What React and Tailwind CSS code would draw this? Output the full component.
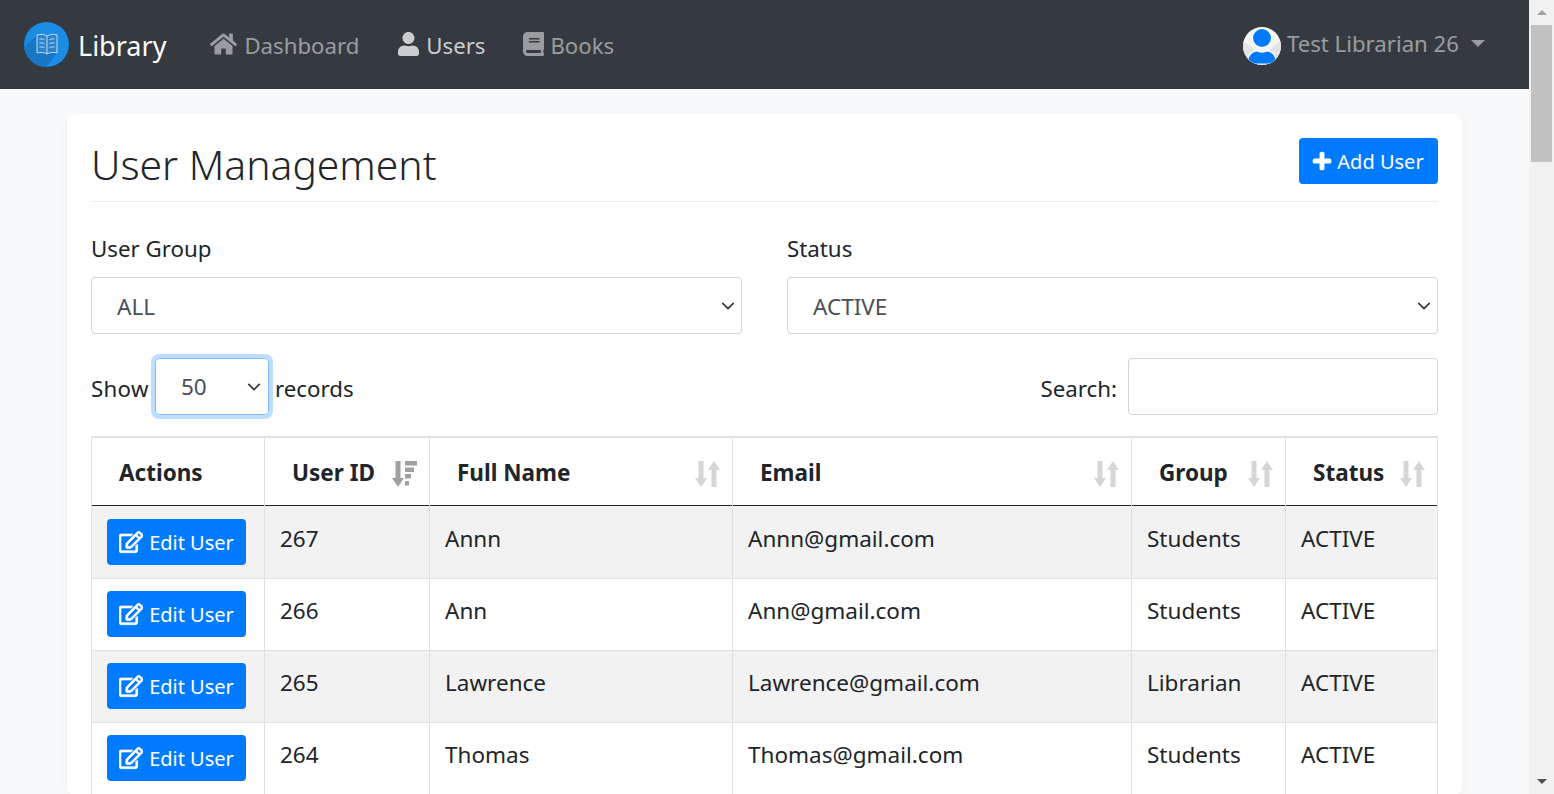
import React from 'react';
import { FaHome, FaUser, FaBook, FaPlus, FaRegEdit } from 'react-icons/fa';

const users = [
  { id: 267, name: 'Annn', email: 'Annn@gmail.com', group: 'Students' },
  { id: 266, name: 'Ann', email: 'Ann@gmail.com', group: 'Students' },
  { id: 265, name: 'Lawrence', email: 'Lawrence@gmail.com', group: 'Librarian' },
  { id: 264, name: 'Thomas', email: 'Thomas@gmail.com', group: 'Students' },
];

const SortIcon = () => (
  <svg viewBox="0 0 25 26" className="absolute right-[12px] top-[23px] h-[26px] w-[25px]" fill="#d6d6d6">
    <path d="M3.500 0h5v17H12L6 26 0 17h3.500z" />
    <path d="M16.500 26h5V9H25L19 0l-6 9h3.500z" />
  </svg>
);

const SortedIcon = () => (
  <svg viewBox="0 0 25 26" className="absolute right-[12px] top-[23px] h-[26px] w-[25px]" fill="#a0a0a0">
    <path d="M3.500 0h5v17H12L6 26 0 17h3.500z" />
    <path d="M13 0h12v4.500H13zM13 6.500h9V11h-9zM13 13h6v4.500h-6zM13 20h4v4.500h-4z" />
  </svg>
);

const Chevron = () => (
  <svg viewBox="0 0 16 16" className="h-[14px] w-[14px] text-[#343a40]" fill="none" stroke="currentColor" strokeWidth="2" strokeLinecap="round" strokeLinejoin="round">
    <path d="M2 5l6 6 6-6" />
  </svg>
);

const Logo = () => (
  <svg viewBox="0 0 45 45" className="h-[45px] w-[45px]">
    <defs>
      <clipPath id="logo-clip"><circle cx="22.5" cy="22.5" r="22.5" /></clipPath>
    </defs>
    <circle cx="22.5" cy="22.5" r="22.5" fill="#1b8ce3" />
    <g clipPath="url(#logo-clip)">
      <path d="M13 13L-3 29 18 50 33 31z" fill="#146fb8" opacity="0.7" />
    </g>
    <path d="M13 13c3.500-1 7-.8 10 1 3-1.800 6.500-2 10-1v18c-3.500-1-7-.8-10 1-3-1.800-6.500-2-10-1z" fill="#2b83cb" stroke="#cfe6f8" strokeWidth="0.9" />
    <path d="M23 14v18M15.500 17c1.800-.3 3.500 0 5 .7M15.500 21c1.800-.3 3.500 0 5 .7M15.500 25c1.800-.3 3.500 0 5 .7M30.500 17c-1.800-.3-3.500 0-5 .7M30.500 21c-1.800-.3-3.500 0-5 .7M30.500 25c-1.800-.3-3.500 0-5 .7" fill="none" stroke="#cfe6f8" strokeWidth="0.9" />
  </svg>
);

const Avatar = () => (
  <svg viewBox="0 0 38 38" className="mt-[2px] h-[38px] w-[38px]">
    <defs>
      <clipPath id="avatar-clip"><circle cx="19" cy="19" r="19" /></clipPath>
    </defs>
    <g clipPath="url(#avatar-clip)">
      <path d="M0 0h38v38H0z" fill="#f4f4f4" />
      <path d="M0 14l19 14 19-14v24H0z" fill="#e4e4e4" />
      <circle cx="19" cy="11" r="10.500" fill="#fff" />
      <circle cx="19" cy="11" r="9" fill="#007bff" />
      <path d="M4 38c0-9 3-14 9-15 4 1.500 8 1.500 12 0 6 1 9 6 9 15z" fill="#fff" />
      <path d="M5 36c0-6 3.500-11 8.500-11.500 3.500 1.500 7.500 1.500 11 0C29.500 25 33 30 33 36v2H5z" fill="#007bff" />
      <path d="M0 36.500h38V38H0z" fill="#fff" opacity="0.9" />
    </g>
  </svg>
);

const App = () => {
  return (
    <div className="flex h-[794px] w-[1554px] overflow-hidden bg-[#f8f9fa] text-[#212529] font-['Noto_Sans',sans-serif]">
      <div className="w-[1529px] shrink-0 overflow-hidden">
        <nav className="flex h-[89px] items-center bg-[#343a40] pl-[24px] pr-[44px]">
          <a className="flex items-center text-[27px] text-white">
            <Logo />
            <span className="ml-[9px] pt-[3px]">Library</span>
          </a>
          <div className="ml-[44px] flex items-center text-[22.2px] text-white/50">
            <a className="flex items-center">
              <FaHome className="h-[24px] w-[27px]" />
              <span className="ml-[7px] pt-[2px]">Dashboard</span>
            </a>
            <a className="ml-[39px] flex items-center text-white/75">
              <FaUser className="h-[24px] w-[21px]" />
              <span className="ml-[7px] pt-[2px]">Users</span>
            </a>
            <a className="ml-[38px] flex items-center">
              <FaBook className="h-[24px] w-[21px]" />
              <span className="ml-[6px] pt-[2px]">Books</span>
            </a>
          </div>
          <div className="ml-auto flex items-center text-[22.2px] text-white/50">
            <Avatar />
            <span className="ml-[6px] -mt-[2px]">Test Librarian 26</span>
            <span className="ml-[12px] -mt-[3px] h-0 w-0 border-x-[7px] border-t-[7px] border-x-transparent border-t-white/50" />
          </div>
        </nav>

        <main className="px-[67px] pt-[25px]">
          <div className="rounded-[8px] bg-white px-[24px] pt-[24px] shadow-[0_2px_8px_rgba(0,0,0,0.04)]">
            <div className="flex items-start justify-between border-b border-[#e9ecef] h-[64px]">
              <h1 className="text-[40.8px] font-light leading-[52px] text-[#212529]">User Management</h1>
              <button className="flex h-[46px] w-[139px] items-center justify-center rounded-[4px] bg-[#007bff] text-[20px] text-white">
                <FaPlus className="mr-[5px] -ml-[1px] h-[20px] w-[20px] stroke-[30px]" stroke="currentColor" />
                <span className="pt-[2px]">Add User</span>
              </button>
            </div>

            <div className="mt-[30px] grid grid-cols-2 gap-x-[45px]">
              <div>
                <label className="block text-[22.3px] leading-[34px]">User Group</label>
                <div className="mt-[11px] flex h-[57px] items-center justify-between rounded-[4px] border border-[#ced4da] pl-[25px] pr-[6px] text-[22.5px] text-[#495057]">
                  <span className="pt-[2px]">ALL</span>
                  <Chevron />
                </div>
              </div>
              <div>
                <label className="block text-[22.3px] leading-[34px]">Status</label>
                <div className="mt-[11px] flex h-[57px] items-center justify-between rounded-[4px] border border-[#ced4da] pl-[25px] pr-[6px] text-[22.5px] text-[#495057]">
                  <span className="pt-[2px]">ACTIVE</span>
                  <Chevron />
                </div>
              </div>
            </div>

            <div className="mt-[24px] flex h-[57px] items-center justify-between text-[22.3px]">
              <div className="flex items-center">
                <span className="w-[58px] pt-[4px] tracking-[0.3px]">Show</span>
                <div className="mx-[6px] flex h-[57px] w-[114px] items-center justify-between rounded-[4px] border border-[#80bdff] pl-[25px] pr-[7px] text-[22.5px] text-[#495057] shadow-[0_0_0_4px_rgba(0,123,255,0.25)]">
                  50
                  <Chevron />
                </div>
                <span className="pt-[4px]">records</span>
              </div>
              <div className="flex items-center">
                <span className="pt-[4px]">Search:</span>
                <div className="ml-[11px] h-[57px] w-[310px] rounded-[4px] border border-[#ced4da]" />
              </div>
            </div>

            <table className="mt-[21px] w-[1346px] table-fixed border-collapse border-t-2 border-[#dee2e6] text-[22.5px]">
              <thead>
                <tr className="h-[68px] border-b border-[#212529] font-bold">
                  <th className="relative w-[173px] border border-b-0 border-t-0 border-[#dee2e6] pl-[27px] pt-[3px] text-left">Actions</th>
                  <th className="relative w-[165px] border border-b-0 border-t-0 border-[#dee2e6] pl-[27px] pt-[3px] text-left">User ID<SortedIcon /></th>
                  <th className="relative w-[303px] border border-b-0 border-t-0 border-[#dee2e6] pl-[27px] pt-[3px] text-left">Full Name<SortIcon /></th>
                  <th className="relative w-[399px] border border-b-0 border-t-0 border-[#dee2e6] pl-[27px] pt-[3px] text-left">Email<SortIcon /></th>
                  <th className="relative w-[154px] border border-b-0 border-t-0 border-[#dee2e6] pl-[27px] pt-[3px] text-left">Group<SortIcon /></th>
                  <th className="relative w-[152px] border border-b-0 border-t-0 border-[#dee2e6] pl-[27px] pt-[3px] text-left">Status<SortIcon /></th>
                </tr>
              </thead>
              <tbody>
                {users.map((u, i) => {
                  const cell = i === 0
                    ? 'border-x border-[#dee2e6] pl-[15px] align-top pt-[16px]'
                    : 'border-x border-[#dee2e6] pl-[15px] align-top pt-[15px]';
                  return (
                    <tr key={u.id} className={`border-b border-[#dee2e6] ${i === 0 ? 'h-[73px]' : 'h-[72px]'} ${i % 2 === 0 ? 'bg-[#f2f2f2]' : 'bg-white'}`}>
                      <td className={`border-x border-[#dee2e6] pl-[15px] align-top ${i === 0 ? 'pt-[13px]' : 'pt-[12px]'}`}>
                        <button className="flex h-[46px] w-[139px] items-center justify-center rounded-[4px] bg-[#007bff] text-[20px] text-white">
                          <FaRegEdit className="mr-[6px] h-[24px] w-[24px] stroke-[16px]" stroke="currentColor" />
                          <span className="pt-[3px]">Edit User</span>
                        </button>
                      </td>
                      <td className={cell}>{u.id}</td>
                      <td className={cell}>{u.name}</td>
                      <td className={cell}>{u.email}</td>
                      <td className={cell}>{u.group}</td>
                      <td className={cell}>ACTIVE</td>
                    </tr>
                  );
                })}
              </tbody>
            </table>
          </div>
        </main>
      </div>

      {/* scrollbar */}
      <div className="relative w-[25px] shrink-0 bg-[#f1f1f1]">
        <div className="absolute left-[8px] top-[10px] h-0 w-0 border-x-[5px] border-b-[5px] border-x-transparent border-b-[#a3a3a3]" />
        <div className="absolute left-[2px] top-[25px] h-[137px] w-[21px] bg-[#c1c1c1]" />
        <div className="absolute bottom-[10px] left-[8px] h-0 w-0 border-x-[5px] border-t-[5px] border-x-transparent border-t-[#505050]" />
      </div>
    </div>
  );
};

export default App;
